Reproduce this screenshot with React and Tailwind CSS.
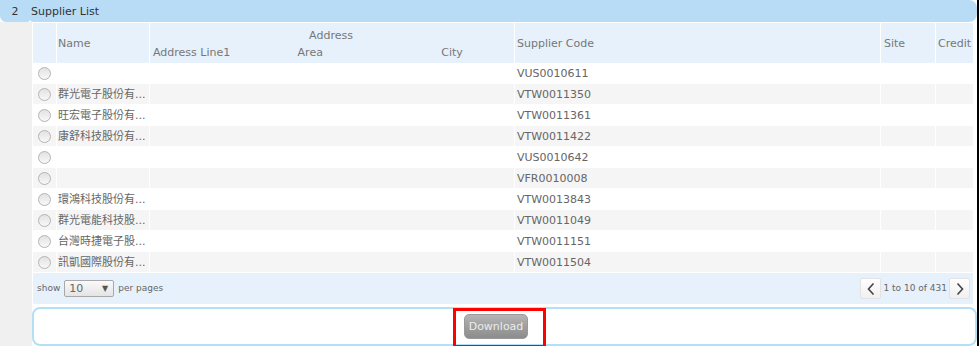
import React from "react";

const rows = [
  { name: "", code: "VUS0010611" },
  { name: "群光電子股份有...", code: "VTW0011350" },
  { name: "旺宏電子股份有...", code: "VTW0011361" },
  { name: "康舒科技股份有...", code: "VTW0011422" },
  { name: "", code: "VUS0010642" },
  { name: "", code: "VFR0010008" },
  { name: "環鴻科技股份有...", code: "VTW0013843" },
  { name: "群光電能科技股...", code: "VTW0011049" },
  { name: "台灣時捷電子股...", code: "VTW0011151" },
  { name: "訊凱國際股份有...", code: "VTW0011504" },
];

const Radio = () => (
  <span className="block h-[13px] w-[13px] rounded-full border border-[#b4b4b4] bg-gradient-to-b from-[#e2e2e2] to-[#f8f8f8]" />
);

const PageButton = ({ dir }) => (
  <button className="flex h-[21px] w-[21px] items-center justify-center rounded-[2px] border border-[#e2e2e2] bg-gradient-to-b from-white to-[#f0f0f0]">
    <svg width="10" height="14" viewBox="0 0 10 14" fill="none" stroke="#444" strokeWidth="1.6">
      {dir === "prev" ? <path d="M7.5 1.5 L2.5 7 L7.5 12.5" /> : <path d="M2.5 1.5 L7.5 7 L2.5 12.5" />}
    </svg>
  </button>
);

const App = () => {
  return (
    <div className="flex h-[346px] w-[979px] overflow-hidden bg-white font-['DejaVu_Sans','Noto_Sans_CJK_TC',sans-serif] text-[11px] leading-[13px] text-[#666]">
      <div className="flex w-[977px] flex-col">
        {/* Section title bar */}
        <div className="flex h-[22px] shrink-0">
          <div className="flex w-[30px] items-center justify-center rounded-bl-[6px] rounded-br-[3px] bg-[#b9dcf6] text-[#333]">
            2
          </div>
          <div className="flex flex-1 items-center rounded-bl-[3px] rounded-r-[8px] bg-[#b9dcf6] pl-[1px] text-[#333]">
            Supplier List
          </div>
        </div>

        <div className="flex flex-1">
          <div className="w-[32px] shrink-0 bg-[#f0f0f0]" />
          <div className="flex flex-1 flex-col">
            {/* Table */}
            <div className="ml-[1px] mt-[1px] w-[940px]">
              {/* Header */}
              <div className="flex h-[40px] bg-[#e6f1fc] text-[#777]">
                <div className="w-[24px] border-r border-white" />
                <div className="flex w-[93px] items-center border-r border-white pl-[1px] pt-[1px]">Name</div>
                <div className="flex w-[365px] flex-col border-r border-white pt-[6px]">
                  <div className="pr-[2px] text-center">Address</div>
                  <div className="mt-[4px] flex">
                    <span className="w-[145px] pl-[3px]">Address Line1</span>
                    <span className="w-[144px] pl-[3px]">Area</span>
                    <span className="w-[76px] pl-[3px]">City</span>
                  </div>
                </div>
                <div className="flex w-[366px] items-center border-r border-white pl-[2px] pt-[1px]">Supplier Code</div>
                <div className="flex w-[55px] items-center border-r border-white pl-[3px] pt-[1px]">Site</div>
                <div className="flex w-[37px] items-center pl-[2px] pt-[1px]">Credit</div>
              </div>

              {/* Rows */}
              {rows.map((r, i) => (
                <div
                  key={i}
                  className={`flex h-[21px] border-b border-white ${i % 2 === 1 ? "bg-[#f5f5f5]" : "bg-white"}`}
                >
                  <div className="flex w-[24px] items-center justify-center border-r border-white">
                    <Radio />
                  </div>
                  <div className="flex w-[93px] items-center overflow-hidden whitespace-nowrap border-r border-white pl-[1px]">
                    {r.name}
                  </div>
                  <div className="w-[365px] border-r border-white" />
                  <div className="flex w-[366px] items-center border-r border-white pl-[2px]">{r.code}</div>
                  <div className="w-[55px] border-r border-white" />
                  <div className="w-[37px]" />
                </div>
              ))}

              {/* Footer */}
              <div className="flex h-[31px] items-center justify-between rounded-bl-[2px] bg-[#e6f1fc] pl-[4px] pr-[3px] text-[9px] text-[#666]">
                <div className="flex items-center gap-[4px]">
                  <span>show</span>
                  <div className="flex h-[17px] w-[50px] items-center justify-between rounded-[2px] border border-[#a8a8a8] bg-gradient-to-b from-[#fafafa] to-[#e4e4e4] pl-[4px] pr-[5px] text-[11px] text-[#666]">
                    <span>10</span>
                    <span className="text-[8px] text-[#555]">▼</span>
                  </div>
                  <span>per pages</span>
                </div>
                <div className="flex items-center gap-[1px]">
                  <PageButton dir="prev" />
                  <span className="px-[1px]">1 to 10 of 431</span>
                  <PageButton dir="next" />
                </div>
              </div>
            </div>

            {/* Action panel */}
            <div className="mt-[3px] flex h-[39px] items-center rounded-[8px] border-2 border-[#b5dff7] bg-white pl-[430px]">
              <div className="relative">
                <button className="h-[25px] w-[64px] rounded-[5px] border border-[#9a9a9a] bg-gradient-to-b from-[#b4b4b4] to-[#8c8c8c] text-[11px] text-[#ececec]">
                  Download
                </button>
                <div className="absolute -left-[11px] -top-[6px] h-[40px] w-[93px] border-[3px] border-[#ff0000]" />
              </div>
            </div>
          </div>
        </div>
      </div>
      <div className="w-[2px] bg-black" />
    </div>
  );
};

export default App;
